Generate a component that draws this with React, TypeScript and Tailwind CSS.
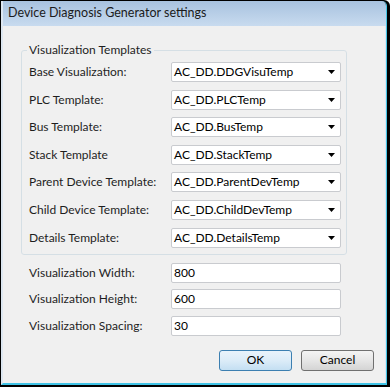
const font = "font-['Lato','Noto_Sans',sans-serif]";

const templates: [string, string][] = [
  ["Base Visualization:", "AC_DD.DDGVisuTemp"],
  ["PLC Template:", "AC_DD.PLCTemp"],
  ["Bus Template:", "AC_DD.BusTemp"],
  ["Stack Template", "AC_DD.StackTemp"],
  ["Parent Device Template:", "AC_DD.ParentDevTemp"],
  ["Child Device Template:", "AC_DD.ChildDevTemp"],
  ["Details Template:", "AC_DD.DetailsTemp"],
];

const sizes: [string, string][] = [
  ["Visualization Width:", "800"],
  ["Visualization Height:", "600"],
  ["Visualization Spacing:", "30"],
];

function Combo({ value }: { value: string }) {
  return (
    <div className="w-[170px] h-[20px] flex items-center bg-white border border-[#c9cbcf] rounded-[2px] pl-[2px] pr-[5px]">
      <span className="flex-1 text-[12px] text-black leading-none">{value}</span>
      <svg width="7" height="4" viewBox="0 0 7 4">
        <path d="M0 0H7L3.5 4Z" fill="#000" />
      </svg>
    </div>
  );
}

export default function App() {
  return (
    <div className={`w-[390px] h-[387px] bg-black pl-[1px] pt-[1px] pr-[3px] pb-[2px] flex rounded-tr-[6px] ${font}`}>
      <div className="flex-1 flex flex-col border-l-[2px] border-l-[#dde7f1] border-r border-r-[#46c6e6] border-b-[2px] border-b-[#3fc3e6] rounded-tr-[5px] overflow-hidden">
        <div className="h-[25px] shrink-0 flex items-center pl-[5px] bg-gradient-to-b from-[#a8c2df] to-[#c8dbef] text-[12.5px] text-[#1b1b1b]">
          Device Diagnosis Generator settings
        </div>
        <div className="flex-1 flex flex-col bg-[#f0f0f0] pt-[16px] border-r border-r-[#dbe6f2]">
          <fieldset className="ml-[18px] w-[326px] border border-[#d5dfe5] rounded-[3px] pl-[7px] pr-[5px] pb-[6px]">
            <legend className="ml-[-2px] px-[2px] text-[12px] leading-[16px] text-[#1e1e1e]">Visualization Templates</legend>
            <div className="mt-[4px] flex flex-col gap-[7.6px]">
              {templates.map(([label, value]) => (
                <div key={label} className="flex items-center h-[20px]">
                  <span className="w-[142px] text-[12px] text-[#1e1e1e]">{label}</span>
                  <Combo value={value} />
                </div>
              ))}
            </div>
          </fieldset>
          <div className="mt-[8px] pl-[26px] flex flex-col gap-[6.5px]">
            {sizes.map(([label, value]) => (
              <div key={label} className="flex items-center h-[20px]">
                <span className="w-[142px] text-[12px] text-[#1e1e1e]">{label}</span>
                <div className="w-[170px] h-[20px] flex items-center bg-white border border-[#c9cbcf] rounded-[2px] pl-[2px] text-[12px] text-black">
                  {value}
                </div>
              </div>
            ))}
          </div>
          <div className="mt-[14px] pr-[11px] flex justify-end gap-[9px]">
            <button className="w-[73px] h-[21px] rounded-[3px] border border-[#3c7fb1] bg-gradient-to-b from-[#e9f3fb] via-[#dcecf8] to-[#c4dff2] text-[12px] text-black">
              OK
            </button>
            <button className="w-[73px] h-[21px] rounded-[3px] border border-[#707070] bg-gradient-to-b from-[#f4f4f4] via-[#e6e6e6] to-[#d4d4d4] text-[12px] text-black">
              Cancel
            </button>
          </div>
        </div>
      </div>
    </div>
  );
}
